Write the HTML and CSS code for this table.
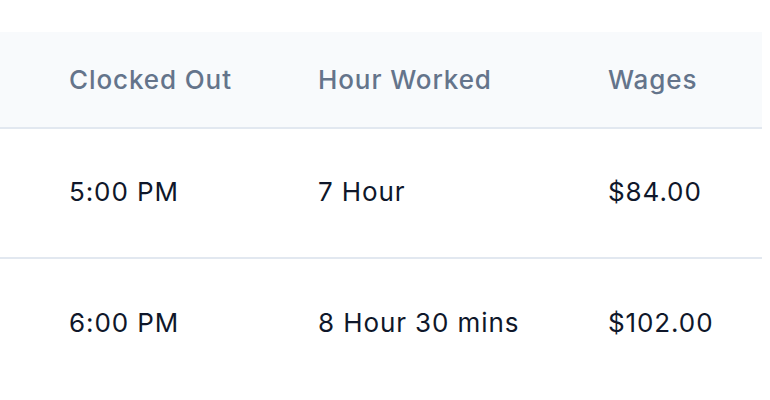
FILE: index.html
```html
<!DOCTYPE html>
<html>
<head>
<meta charset="utf-8">
<link rel="stylesheet" href="styles.css">
</head>
<body>
<div class="page">
  <div class="table">
    <div class="row head">
      <div class="cell">Clocked Out</div>
      <div class="cell">Hour Worked</div>
      <div class="cell">Wages</div>
    </div>
    <div class="row">
      <div class="cell">5:00 PM</div>
      <div class="cell">7 Hour</div>
      <div class="cell">$84.00</div>
    </div>
    <div class="row">
      <div class="cell">6:00 PM</div>
      <div class="cell">8 Hour 30 mins</div>
      <div class="cell">$102.00</div>
    </div>
  </div>
</div>
</body>
</html>
```
FILE: styles.css
```css
html, body {
  margin: 0;
  padding: 0;
  background: #ffffff;
}
.page {
  padding-top: 32px;
  width: 762px;
}
.table {
  font-family: Inter, "Noto Sans", sans-serif;
  font-size: 26px;
  letter-spacing: 0.9px;
  color: #0f172a;
}
.row {
  display: grid;
  grid-template-columns: 294px 290px 178px;
  align-items: center;
  height: 130px;
  padding-bottom: 4px;
  box-sizing: border-box;
  border-bottom: 2px solid #e2e8f0;
}
.row:last-child {
  border-bottom: none;
}
.row.head {
  height: 97px;
  padding-bottom: 0;
  background: #f8fafc;
  color: #64748b;
  font-weight: 500;
}
.cell {
  padding-left: 69px;
  white-space: nowrap;
}
.cell + .cell {
  padding-left: 24px;
}
```
